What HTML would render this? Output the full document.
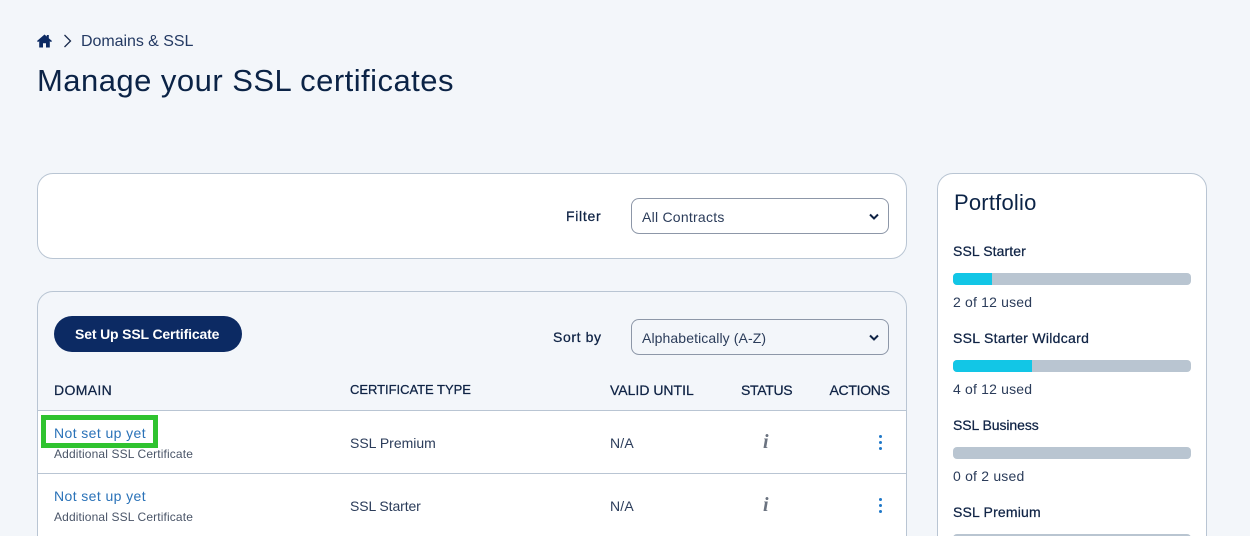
<!DOCTYPE html>
<html lang="en"><head><meta charset="utf-8"><title>Manage your SSL certificates</title>
<style>
html,body{margin:0;padding:0;width:1250px;height:536px;overflow:hidden;background:#f3f6fa}
body{position:relative;font-family:"Liberation Sans",sans-serif;color:#0f2345;font-size:14px}
.t{position:absolute;white-space:nowrap;line-height:20px}
.b{position:absolute;box-sizing:border-box;border:1px solid #b9c5d3}
.sel{position:absolute;box-sizing:border-box;left:631px;width:258px;height:36px;border:1px solid #8d97a8;border-radius:8px}
.sel svg{position:absolute;right:8px;top:14px}
.hd{font-weight:400;-webkit-text-stroke:.25px #0f2345;color:#0f2345}
.lnk{color:#2a72b8;letter-spacing:.4px}
.sub{color:#4a5568;font-size:12px;letter-spacing:.13px}
.bar{position:absolute;left:953px;width:238px;height:12px;border-radius:4px;background:#b9c5d1;overflow:hidden}
.bar i{display:block;height:12px;background:#12c6e6}
.line{position:absolute;left:38px;width:868px;height:1px;background:#b9c5d3}
.dots{position:absolute;left:879px;width:3px}
.dots i{display:block;width:3px;height:3px;border-radius:50%;background:#1f78c8;margin-bottom:3px}
.inf{position:absolute;left:763px;font:italic bold 20px/20px "Liberation Serif",serif;color:#6b7380}
</style></head><body>
<svg style="position:absolute;left:37px;top:34px" width="15" height="14" viewBox="0 0 15 14"><path d="M7.5 0.5 0 7l1 1.1 1.2-1V13.5h3.8V9.2h3v4.3h3.800V7.100l1.200 1 1-1.100L11.800 4.200V1h-2v1.500z" fill="#0c2a63"/></svg>
<svg style="position:absolute;left:63px;top:34px" width="10" height="14" viewBox="0 0 10 14"><path d="M1.500 1 7.500 7l-6 6" fill="none" stroke="#1a2b4d" stroke-width="1.300"/></svg>
<div class="t" style="left:81px;top:32px;font-size:16px;color:#243a63;letter-spacing:-.05px">Domains &amp; SSL</div>
<div class="t" style="left:37px;top:62px;font-size:31px;line-height:38px;color:#0b2346;letter-spacing:.47px">Manage your SSL certificates</div>

<div class="b" style="left:37px;top:173px;width:870px;height:86px;background:#fff;border-radius:16px"></div>
<div class="t hd" style="left:566px;top:206px;letter-spacing:.7px">Filter</div>
<div class="sel" style="top:198px;background:#fff"><svg width="12" height="8" viewBox="0 0 12 8"><path d="M2 1.500 6 5.500l4-4" fill="none" stroke="#0f2345" stroke-width="2"/></svg></div>
<div class="t" style="left:642px;top:207px;color:#2b3c5a;letter-spacing:.25px">All Contracts</div>

<div class="b" style="left:37px;top:291px;width:870px;height:260px;background:#f3f6fa;border-radius:16px 16px 0 0"></div>
<div style="position:absolute;left:38px;top:411px;width:868px;height:125px;background:#fff"></div>
<div style="position:absolute;left:54px;top:316px;width:188px;height:36px;border-radius:18px;background:#0c2a63"></div>
<div class="t" style="left:75px;top:324px;color:#fff;font-weight:700;letter-spacing:-.15px">Set Up SSL Certificate</div>
<div class="t hd" style="left:553px;top:327px;letter-spacing:.6px">Sort by</div>
<div class="sel" style="top:319px"><svg width="12" height="8" viewBox="0 0 12 8"><path d="M2 1.500 6 5.500l4-4" fill="none" stroke="#0f2345" stroke-width="2"/></svg></div>
<div class="t" style="left:642px;top:328px;color:#2b3c5a;letter-spacing:.1px">Alphabetically (A-Z)</div>

<div class="t hd" style="left:54px;top:380px;letter-spacing:.35px">DOMAIN</div>
<div class="t hd" style="left:350px;top:380px;font-size:13px;letter-spacing:-.03px">CERTIFICATE TYPE</div>
<div class="t hd" style="left:610px;top:380px">VALID UNTIL</div>
<div class="t hd" style="left:741px;top:380px;letter-spacing:-.3px">STATUS</div>
<div class="t hd" style="left:829.500px;top:380px;letter-spacing:-.3px">ACTIONS</div>

<div class="line" style="top:410px"></div>
<div class="line" style="top:473px"></div>

<div style="position:absolute;box-sizing:border-box;left:41px;top:415px;width:117px;height:33px;border:5px solid #2fc32f"></div>
<div class="t lnk" style="left:54px;top:423px">Not set up yet</div>
<div class="t sub" style="left:54px;top:444px">Additional SSL Certificate</div>
<div class="t" style="left:350px;top:433px;color:#2b3c5a">SSL Premium</div>
<div class="t" style="left:610px;top:433px;color:#2b3c5a;letter-spacing:.2px">N/A</div>
<div class="inf" style="top:432px">i</div>
<div class="dots" style="top:435px"><i></i><i></i><i></i></div>

<div class="t lnk" style="left:54px;top:486px">Not set up yet</div>
<div class="t sub" style="left:54px;top:507px">Additional SSL Certificate</div>
<div class="t" style="left:350px;top:496px;color:#2b3c5a;letter-spacing:-.1px">SSL Starter</div>
<div class="t" style="left:610px;top:496px;color:#2b3c5a;letter-spacing:.2px">N/A</div>
<div class="inf" style="top:495px">i</div>
<div class="dots" style="top:498px"><i></i><i></i><i></i></div>

<div class="b" style="left:937px;top:173px;width:270px;height:380px;background:#fff;border-radius:16px 16px 0 0"></div>
<div class="t" style="left:954px;top:190px;font-size:22px;line-height:26px;color:#0b2346;letter-spacing:.2px">Portfolio</div>
<div class="t hd" style="left:953px;top:241px;letter-spacing:.1px">SSL Starter</div>
<div class="bar" style="top:273px"><i style="width:39px"></i></div>
<div class="t" style="left:953px;top:292px;color:#2b3c5a;letter-spacing:.18px">2 of 12 used</div>
<div class="t hd" style="left:953px;top:328px;letter-spacing:.3px">SSL Starter Wildcard</div>
<div class="bar" style="top:360px"><i style="width:79px"></i></div>
<div class="t" style="left:953px;top:379px;color:#2b3c5a;letter-spacing:.18px">4 of 12 used</div>
<div class="t hd" style="left:953px;top:415px;letter-spacing:-.08px">SSL Business</div>
<div class="bar" style="top:447px"></div>
<div class="t" style="left:953px;top:466px;color:#2b3c5a;letter-spacing:.2px">0 of 2 used</div>
<div class="t hd" style="left:953px;top:502px;letter-spacing:.18px">SSL Premium</div>
<div class="bar" style="top:534px"></div>
</body></html>
